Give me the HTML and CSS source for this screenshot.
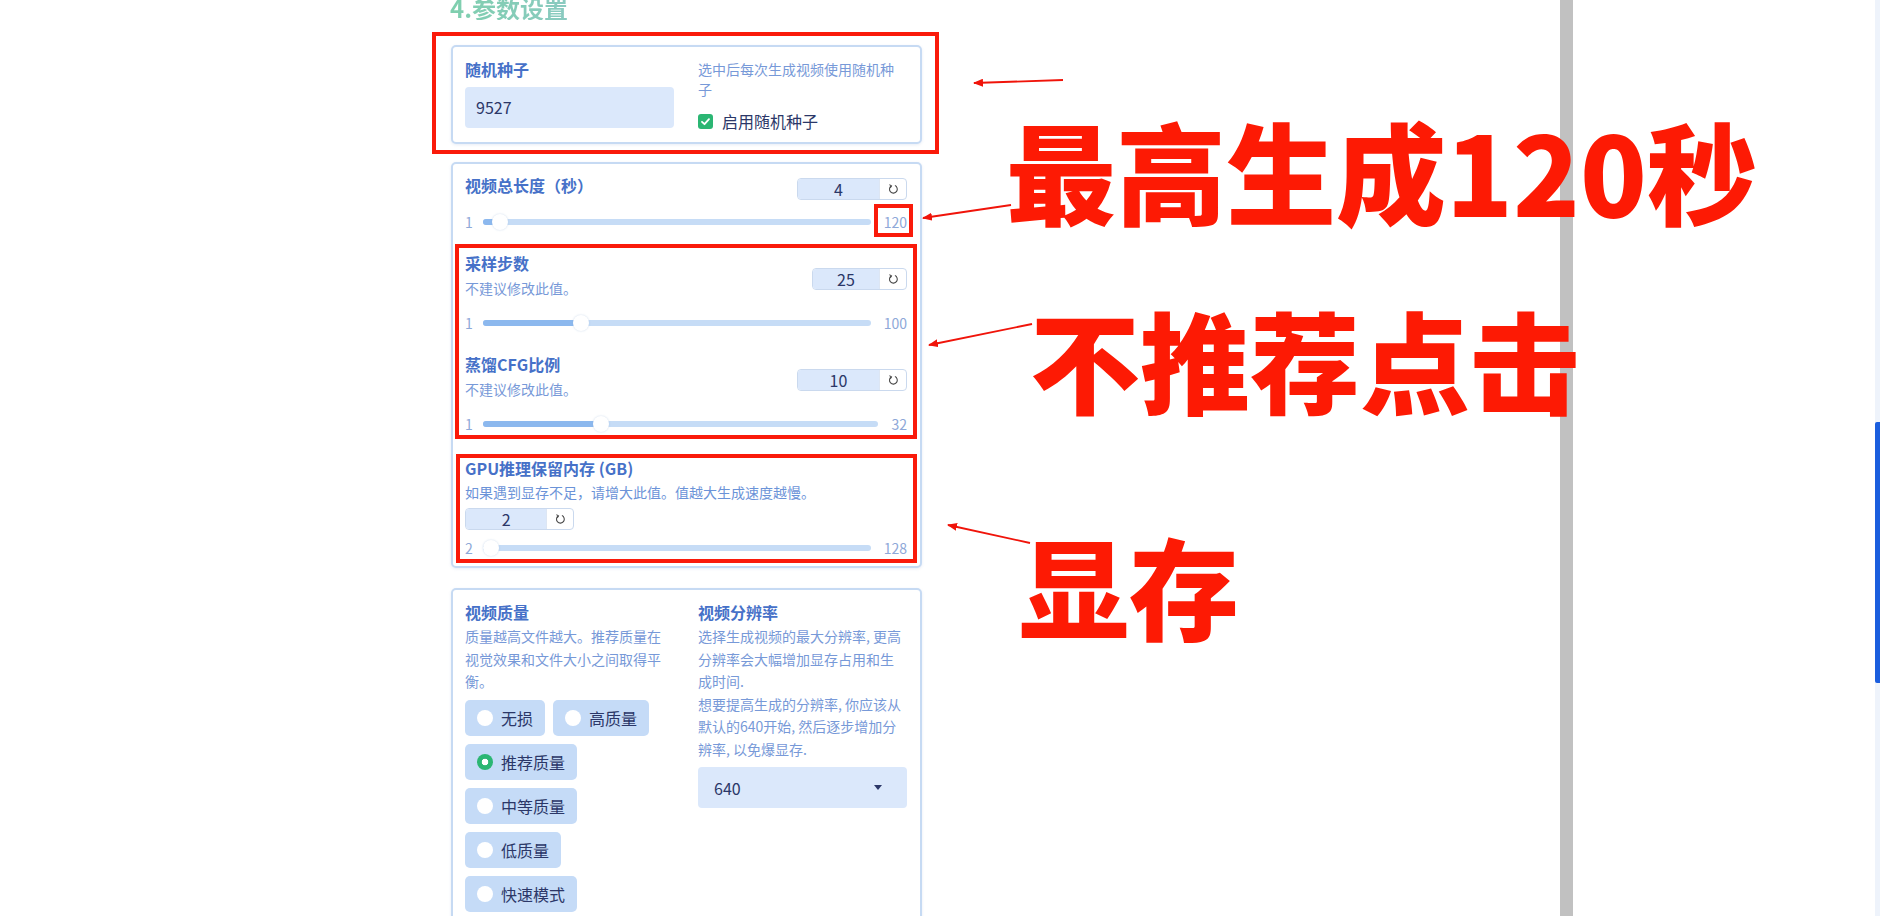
FILE: index.html
```html
<!DOCTYPE html>
<html lang="zh-CN">
<head>
<meta charset="utf-8">
<title>参数设置</title>
<link rel="stylesheet" href="styles.css">
</head>
<body>
<div class="screen">
  <div class="main">
    <div class="panel">
      <div class="title">4.参数设置</div>

      <div class="card card-seed">
        <div class="grid2">
          <div class="col">
            <div class="label">随机种子</div>
            <div class="text-input">9527</div>
          </div>
          <div class="col">
            <div class="desc">选中后每次生成视频使用随机种子</div>
            <div class="check-row">
              <span class="checkbox"><svg viewBox="0 0 15 15" width="15" height="15"><polyline points="4,7.8 6.5,10.2 11,5.2" fill="none" stroke="#fff" stroke-width="1.8" stroke-linecap="round" stroke-linejoin="round"/></svg></span>
              <span class="check-text">启用随机种子</span>
            </div>
          </div>
        </div>
      </div>

      <div class="card card-sliders">
        <div class="field">
          <div class="field-head">
            <div class="label">视频总长度（秒）</div>
            <div class="num num-top">
              <div class="num-val">4</div>
              <div class="num-reset"><svg viewBox="0 0 12 12" width="12" height="12"><path d="M4.3 2.9 A3.9 3.9 0 1 0 7.9 2.6" fill="none" stroke="#4a4a4a" stroke-width="1.1"/><path d="M2.4 1.6 L4.5 2.9 L3.2 4.9" fill="none" stroke="#4a4a4a" stroke-width="1.1"/></svg></div>
            </div>
          </div>
          <div class="slider-row">
            <span class="mm">1</span>
            <div class="track" style="--p:0.0252"><div class="fill"></div><div class="thumb"></div></div>
            <span class="mm">120</span>
          </div>
        </div>

        <div class="field">
          <div class="field-head">
            <div class="head-text">
              <div class="label">采样步数</div>
              <div class="desc desc-sub">不建议修改此值。</div>
            </div>
            <div class="num num-mid narrow">
              <div class="num-val">25</div>
              <div class="num-reset"><svg viewBox="0 0 12 12" width="12" height="12"><path d="M4.3 2.9 A3.9 3.9 0 1 0 7.9 2.6" fill="none" stroke="#4a4a4a" stroke-width="1.1"/><path d="M2.4 1.6 L4.5 2.9 L3.2 4.9" fill="none" stroke="#4a4a4a" stroke-width="1.1"/></svg></div>
            </div>
          </div>
          <div class="slider-row row-sub">
            <span class="mm">1</span>
            <div class="track" style="--p:0.2424"><div class="fill"></div><div class="thumb"></div></div>
            <span class="mm">100</span>
          </div>
        </div>

        <div class="field">
          <div class="field-head">
            <div class="head-text">
              <div class="label">蒸馏CFG比例</div>
              <div class="desc desc-sub">不建议修改此值。</div>
            </div>
            <div class="num num-mid">
              <div class="num-val">10</div>
              <div class="num-reset"><svg viewBox="0 0 12 12" width="12" height="12"><path d="M4.3 2.9 A3.9 3.9 0 1 0 7.9 2.6" fill="none" stroke="#4a4a4a" stroke-width="1.1"/><path d="M2.4 1.6 L4.5 2.9 L3.2 4.9" fill="none" stroke="#4a4a4a" stroke-width="1.1"/></svg></div>
            </div>
          </div>
          <div class="slider-row row-sub">
            <span class="mm">1</span>
            <div class="track" style="--p:0.2903"><div class="fill"></div><div class="thumb"></div></div>
            <span class="mm">32</span>
          </div>
        </div>

        <div class="field field-gpu">
          <div class="label">GPU推理保留内存 (GB)</div>
          <div class="desc desc-gpu">如果遇到显存不足，请增大此值。值越大生成速度越慢。</div>
          <div class="num num-gpu">
            <div class="num-val">2</div>
            <div class="num-reset"><svg viewBox="0 0 12 12" width="12" height="12"><path d="M4.3 2.9 A3.9 3.9 0 1 0 7.9 2.6" fill="none" stroke="#4a4a4a" stroke-width="1.1"/><path d="M2.4 1.6 L4.5 2.9 L3.2 4.9" fill="none" stroke="#4a4a4a" stroke-width="1.1"/></svg></div>
          </div>
          <div class="slider-row row-gpu">
            <span class="mm">2</span>
            <div class="track" style="--p:0"><div class="fill"></div><div class="thumb"></div></div>
            <span class="mm">128</span>
          </div>
        </div>
      </div>

      <div class="card card-quality">
        <div class="grid2">
          <div class="col">
            <div class="label">视频质量</div>
            <div class="desc desc-long">质量越高文件越大。推荐质量在视觉效果和文件大小之间取得平衡。</div>
            <div class="radios">
              <div class="pill"><span class="dot"></span>无损</div>
              <div class="pill"><span class="dot"></span>高质量</div>
              <div class="pill"><span class="dot on"></span>推荐质量</div>
              <div class="pill"><span class="dot"></span>中等质量</div>
              <div class="pill"><span class="dot"></span>低质量</div>
              <div class="pill"><span class="dot"></span>快速模式</div>
            </div>
          </div>
          <div class="col">
            <div class="label">视频分辨率</div>
            <div class="desc desc-long">选择生成视频的最大分辨率, 更高分辨率会大幅增加显存占用和生成时间.<br>想要提高生成的分辨率, 你应该从默认的640开始, 然后逐步增加分辨率, 以免爆显存.</div>
            <div class="select">
              <span>640</span>
              <svg viewBox="0 0 8 5" width="8" height="5"><path d="M0 0 L8 0 L4 5 Z" fill="#2b3768"/></svg>
            </div>
          </div>
        </div>
      </div>
    </div>
  </div>
  <div class="divider"></div>
  <div class="side"></div>
  <div class="scrollbar"><div class="scroll-thumb"></div></div>

  <div class="redbox rb1"></div>
  <div class="redbox rb2"></div>
  <div class="redbox rb3"></div>
  <div class="redbox rb4"></div>

  <svg class="arrows" width="1880" height="916" viewBox="0 0 1880 916">
    <defs>
      <marker id="ah" markerUnits="userSpaceOnUse" markerWidth="10" markerHeight="8" refX="9" refY="4" orient="auto">
        <path d="M0 0 L10 4 L0 8 Z" fill="#f0140a"/>
      </marker>
    </defs>
    <line x1="1063" y1="80" x2="974" y2="83" stroke="#f0140a" stroke-width="1.8" marker-end="url(#ah)"/>
    <line x1="1011" y1="205" x2="923" y2="218" stroke="#f0140a" stroke-width="1.8" marker-end="url(#ah)"/>
    <line x1="1032" y1="324" x2="929" y2="345" stroke="#f0140a" stroke-width="1.8" marker-end="url(#ah)"/>
    <line x1="1030" y1="543" x2="948" y2="525" stroke="#f0140a" stroke-width="1.8" marker-end="url(#ah)"/>
  </svg>

  <div class="ann ann1">最高生成120秒</div>
  <div class="ann ann2">不推荐点击</div>
  <div class="ann ann3">显存</div>
</div>
</body>
</html>
```

FILE: styles.css
```css
* { box-sizing: border-box; }
html, body { margin: 0; padding: 0; background: #fff; }
body {
  font-family: "Noto Sans CJK SC", "Noto Sans", sans-serif;
  color: #2b3768;
}
.screen {
  position: relative;
  width: 1880px;
  height: 916px;
  overflow: hidden;
  display: flex;
}
.main { width: 1560px; flex: none; }
.panel { margin-left: 451px; width: 471px; }

.title {
  margin-top: -4px;
  margin-left: -1px;
  font-size: 24px;
  line-height: 24px;
  height: 24px;
  font-weight: 700;
  background: linear-gradient(90deg, #7fcfae 0%, #93c6cf 45%, #a3bfe6 100%);
  -webkit-background-clip: text;
  background-clip: text;
  color: transparent;
}

.card {
  border: 2px solid #c6daf3;
  border-radius: 5px;
  background: #fff;
  box-shadow: 0 1px 3px rgba(120, 150, 200, 0.18);
  padding: 12px 13px 9px 12px;
}
.card-seed { margin-top: 25px; }
.card-sliders { margin-top: 18px; padding-top: 11px; padding-bottom: 8px; }
.card-quality { margin-top: 20px; padding-top: 12px; height: 360px; }

.grid2 {
  display: grid;
  grid-template-columns: 209px 209px;
  column-gap: 24px;
}

.label {
  font-size: 16px;
  line-height: 20px;
  font-weight: 700;
  color: #4671c8;
  white-space: nowrap;
}
.desc {
  font-size: 14px;
  line-height: 20px;
  color: #7799d8;
}

.text-input {
  margin-top: 8px;
  height: 41px;
  background: #dbe8fb;
  border-radius: 4px;
  padding-left: 11px;
  font-size: 16px;
  line-height: 41px;
  color: #2b3768;
}

.check-row {
  margin-top: 10px;
  height: 24px;
  display: flex;
  align-items: center;
  gap: 9px;
}
.checkbox {
  width: 15px;
  height: 15px;
  border-radius: 3px;
  background: #2bb673;
  display: flex;
}
.check-text { font-size: 16px; line-height: 24px; color: #2b3768; }

/* slider fields */
.field + .field { margin-top: 21px; }
.field-gpu.field { margin-top: 24px; }
.field-head {
  display: flex;
  justify-content: space-between;
  align-items: flex-start;
}
.desc-sub { margin-top: 5px; }
.desc-gpu { margin-top: 4px; color: #6b93d8; }

.num {
  display: flex;
  height: 22px;
  border: 1px solid #cad9ee;
  border-radius: 4px;
  overflow: hidden;
  background: #fff;
}
.num-top { margin-top: 3px; }
.num-mid { margin-top: 15px; }
.num-gpu { margin-top: 6px; width: 109px; }
.num-val {
  width: 81px;
  background: #dbe8fb;
  font-size: 16px;
  line-height: 20px;
  text-align: center;
  color: #2b3768;
}
.narrow .num-val { width: 66px; }
.num-reset {
  width: 27px;
  border-left: 1px solid #dde6f3;
  display: flex;
  align-items: center;
  justify-content: center;
}

.slider-row {
  margin-top: 12px;
  height: 20px;
  display: flex;
  align-items: center;
}
.row-sub { margin-top: 15px; }
.row-gpu { margin-top: 8px; }
.mm {
  font-size: 14px;
  line-height: 20px;
  color: #8ea8d8;
}
.track {
  position: relative;
  flex: 1;
  height: 6px;
  margin: 0 13px 0 10px;
  border-radius: 3px;
  background: #c6dcf6;
}
.fill {
  position: absolute;
  left: 0;
  top: 0;
  bottom: 0;
  width: calc(var(--p) * (100% - 16px) + 8px);
  background: #8cb8ee;
  border-radius: 3px;
}
.thumb {
  position: absolute;
  top: -5px;
  left: calc(var(--p) * (100% - 16px));
  width: 16px;
  height: 16px;
  border-radius: 50%;
  background: #fff;
  box-shadow: 0 0 2px rgba(140, 170, 210, 0.45);
}

/* quality card */
.desc-long { margin-top: 3px; line-height: 22.5px; }
.radios {
  margin-top: 7px;
  display: flex;
  flex-wrap: wrap;
  gap: 8px;
}
.pill {
  height: 36px;
  padding: 0 12px;
  display: flex;
  align-items: center;
  gap: 8px;
  background: #c5dbf7;
  border-radius: 5px;
  font-size: 16px;
  color: #2b3768;
}
.dot {
  width: 16px;
  height: 16px;
  border-radius: 50%;
  background: #fff;
}
.dot.on {
  background: radial-gradient(circle, #fff 0 3px, #2bb673 3.6px);
}
.select {
  margin-top: 7px;
  height: 41px;
  background: #dbe8fb;
  border-radius: 4px;
  padding: 0 25px 0 16px;
  display: flex;
  align-items: center;
  justify-content: space-between;
  font-size: 16px;
  color: #2b3768;
}

/* right side chrome */
.divider { width: 13px; flex: none; background: #c1c1c1; }
.side { flex: 1; background: #fff; }
.scrollbar {
  width: 5px;
  flex: none;
  background: #eef3fb;
  display: flex;
  flex-direction: column;
}
.scroll-thumb {
  margin-top: 422px;
  height: 261px;
  background: #1b5ede;
  border-radius: 2px 0 0 2px;
}

/* annotations */
.redbox {
  position: absolute;
  border: 4px solid #fa1a0a;
}
.rb1 { left: 432px; top: 32px; width: 507px; height: 122px; }
.rb2 { left: 874px; top: 204px; width: 39px; height: 33px; }
.rb3 { left: 455px; top: 244px; width: 462px; height: 195px; }
.rb4 { left: 456px; top: 454px; width: 461px; height: 109px; }

.arrows { position: absolute; left: 0; top: 0; }

.ann {
  position: absolute;
  font-family: "Noto Sans CJK SC", sans-serif;
  font-weight: 900;
  font-size: 110px;
  line-height: 110px;
  color: #fd1a04;
  white-space: nowrap;
}
.ann1 { left: 1006px; top: 114px; }
.ann2 { left: 1030px; top: 303px; }
.ann3 { left: 1019px; top: 529px; }
```
